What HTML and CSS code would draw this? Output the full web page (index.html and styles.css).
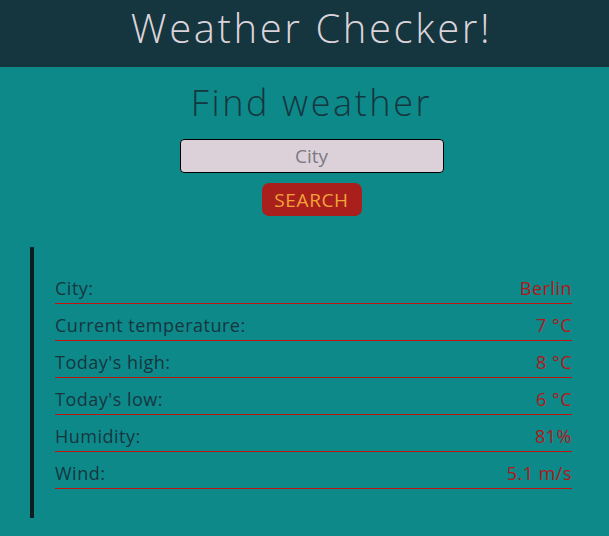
FILE: index.html
```html
<!DOCTYPE html>
<html>
<head>
<meta charset="utf-8">
<link rel="stylesheet" href="styles.css">
</head>
<body>
<header class="top">
  <h1 class="title">Weather Checker!</h1>
</header>
<main class="main">
  <h2 class="find">Find weather</h2>
  <form class="search">
    <input class="city" type="text" placeholder="City">
    <button class="btn" type="button">SEARCH</button>
  </form>
  <section class="panel">
    <div class="row"><span class="label">City:</span><span class="value">Berlin</span></div>
    <div class="row"><span class="label">Current temperature:</span><span class="value">7 °C</span></div>
    <div class="row"><span class="label">Today's high:</span><span class="value">8 °C</span></div>
    <div class="row"><span class="label">Today's low:</span><span class="value">6 °C</span></div>
    <div class="row"><span class="label">Humidity:</span><span class="value">81%</span></div>
    <div class="row"><span class="label">Wind:</span><span class="value">5.1 m/s</span></div>
  </section>
</main>
</body>
</html>
```
FILE: styles.css
```css
* { box-sizing: border-box; }
html, body { margin: 0; padding: 0; }
body {
  background: #0e898a;
  font-family: "Open Sans", "Noto Sans", sans-serif;
  width: 609px;
  height: 536px;
  overflow: hidden;
}
.top {
  background: #15363f;
  height: 67px;
  display: flex;
  justify-content: center;
  padding-left: 14px;
}
.title {
  margin: 0;
  font-weight: 300;
  font-size: 40px;
  line-height: 56px;
  letter-spacing: 2.6px;
  color: #dcd3da;
}
.main {
  display: flex;
  flex-direction: column;
  align-items: center;
}
.find {
  margin: 13px 0 0 14px;
  font-weight: 300;
  font-size: 36px;
  line-height: 46px;
  letter-spacing: 2.6px;
  color: #15363f;
}
.search {
  display: flex;
  flex-direction: column;
  align-items: center;
  margin: 13px 0 0 14px;
}
.city {
  width: 264px;
  height: 34px;
  background: #dcd1d9;
  border: 1px solid #000;
  border-radius: 4px;
  text-align: center;
  font-family: inherit;
  font-size: 19px;
  color: #333;
  outline: none;
}
.city::placeholder { color: #7a7a84; }
.btn {
  margin-top: 10px;
  width: 100px;
  height: 33px;
  background: #a81f1c;
  border: none;
  border-radius: 7px;
  color: #f2a33a;
  font-family: inherit;
  font-size: 19px;
  letter-spacing: 0.6px;
  padding: 0;
}
.panel {
  align-self: stretch;
  margin: 31px 37px 0 30px;
  border-left: 4px solid #0b1c22;
  padding: 20px 0 29px 21px;
}
.row {
  display: flex;
  justify-content: space-between;
  align-items: flex-end;
  height: 37px;
  padding-bottom: 3px;
  border-bottom: 1px solid #c3130f;
  font-size: 18px;
  line-height: 24px;
  letter-spacing: 0.5px;
}
.label { color: #15363f; }
.value { color: #b01818; }
```
